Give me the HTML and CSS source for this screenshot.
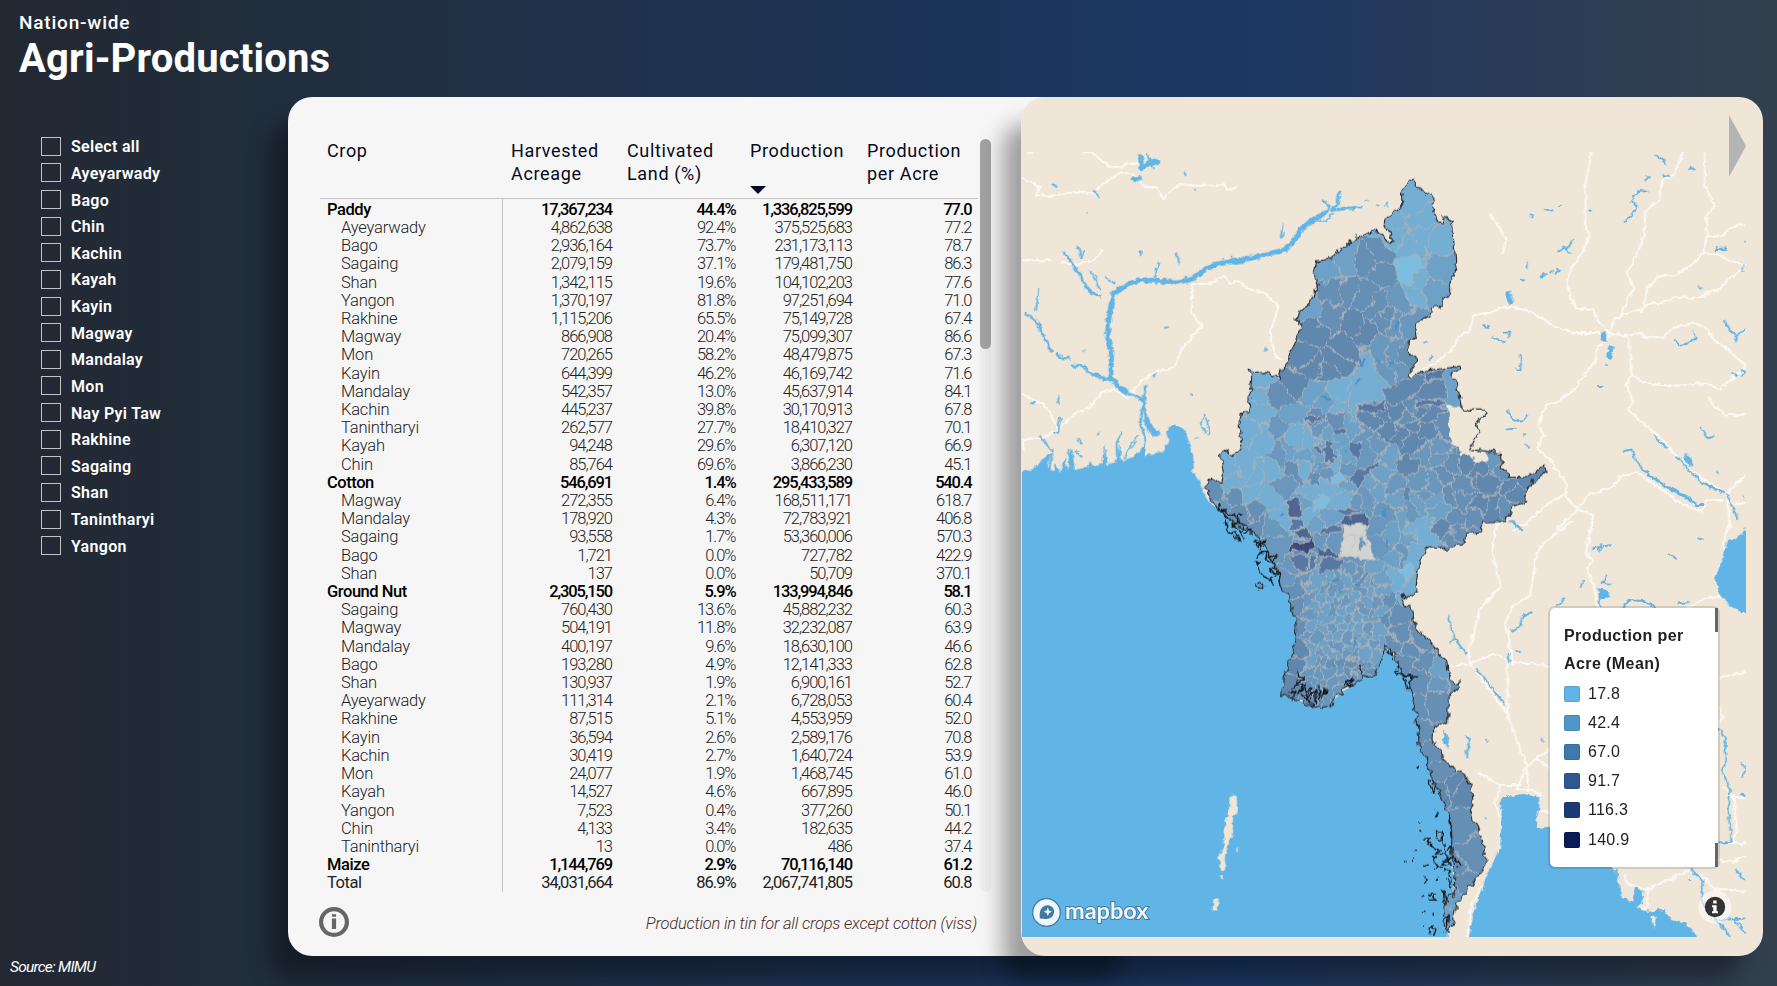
FILE: index.html
```html
<!DOCTYPE html>
<html lang="en">
<head>
<meta charset="utf-8">
<title>Agri-Productions</title>
<link rel="stylesheet" href="styles.css">
</head>
<body>
<div class="page">
  <aside class="side">
    <header class="heading">
      <div class="scope">Nation-wide</div>
      <h1 class="title">Agri-Productions</h1>
    </header>
    <ul class="slicer" id="slicer"></ul>
    <div class="source">Source: MIMU</div>
  </aside>
  <main class="cards">
    <section class="card table-card">
      <div class="table-area">
        <div class="table">
          <div class="row head">
            <div class="name">Crop</div>
            <div class="c1">Harvested<br>Acreage</div>
            <div class="c2">Cultivated<br>Land (%)</div>
            <div class="c3">Production<svg class="sort" viewBox="0 0 16 8"><path d="M0 0H16L8 8Z"/></svg></div>
            <div class="c4">Production<br>per Acre</div>
          </div>
          <div class="body" id="rows"></div>
        </div>
        <div class="scroll"><div class="thumb"></div></div>
      </div>
      <div class="foot">
        <svg class="info" viewBox="0 0 30 30"><circle cx="15" cy="15" r="12.9"/><path d="M15 7.2v2.6M15 11.6v10.4"/></svg>
        <div class="note">Production in tin for all crops except cotton (viss)</div>
      </div>
    </section>
    <section class="card map-card">
      <svg class="next" viewBox="0 0 17 62"><path d="M0 0L17 31L0 62Z"/></svg>
      <div class="map-area">
      <svg class="map" viewBox="3066 456 2172 2355" preserveAspectRatio="none">
        <defs>
          <filter id="rough" filterUnits="userSpaceOnUse" x="3066" y="456" width="2172" height="2355">
            <feTurbulence type="fractalNoise" baseFrequency="0.045" numOctaves="2" seed="4" result="n"/>
            <feDisplacementMap in="SourceGraphic" in2="n" scale="26" xChannelSelector="R" yChannelSelector="G"/>
          </filter>
          <filter id="wavy" filterUnits="userSpaceOnUse" x="3066" y="456" width="2172" height="2355">
            <feTurbulence type="fractalNoise" baseFrequency="0.022" numOctaves="1" seed="7" result="n"/>
            <feDisplacementMap in="SourceGraphic" in2="n" scale="52" xChannelSelector="R" yChannelSelector="G"/>
          </filter>
          <filter id="rough2" filterUnits="userSpaceOnUse" x="3066" y="456" width="2172" height="2355">
            <feTurbulence type="fractalNoise" baseFrequency="0.06" numOctaves="2" seed="9" result="n"/>
            <feDisplacementMap in="SourceGraphic" in2="n" scale="16" xChannelSelector="R" yChannelSelector="G"/>
          </filter>
          <clipPath id="country"><use href="#outline"/></clipPath>
          <path id="outline" transform="translate(3540 1020)" d="M682 -475L690 -482L703 -480L707 -458L735 -455L738 -438L755 -432L758 -400L775 -350L787 -352L790 -367L817 -358L822 -290L827 -240L820 -190L805 -172L817 -140L800 -130L780 -102L755 -98L750 -70L720 -60L707 -35L712 -8L688 5L686 40L704 50L707 78L682 105L695 112L720 95L780 86L840 78L838 88L817 98L818 118L832 130L838 165L843 198L865 210L905 210L915 225L890 250L897 278L870 328L930 335L962 340L965 385L985 408L1050 410L1075 385L1095 375L1098 398L1050 432L1030 482L1040 485L1000 498L978 548L905 548L905 575L860 580L850 615L780 627L742 618L735 645L720 660L715 700L710 758L680 773L662 765L675 795L695 797L705 855L740 895L797 960L800 990L820 1030L840 1025L842 1040L815 1060L805 1080L803 1145L765 1162L762 1200L780 1235L815 1280L850 1300L870 1330L878 1395L868 1410L875 1435L900 1475L910 1525L925 1565L895 1608L830 1690L825 1730L805 1780L795 1775L790 1720L795 1680L822 1660L825 1600L815 1540L815 1470L800 1410L770 1340L755 1330L750 1290L730 1240L718 1220L712 1150L695 1060L690 1010L665 1000L655 975L645 945L612 915L610 950L590 1000L565 1012L545 1005L538 972L545 1018L515 1035L490 1045L460 1090L430 1105L425 1095L400 1100L360 1085L330 1070L305 1070L310 1010L330 960L345 900L348 850L335 800L320 760L300 740L295 700L270 650L250 600L215 580L180 560L140 530L100 490L75 440L95 412L125 435L130 400L122 345L130 330L165 345L185 320L180 240L185 215L207 215L215 110L205 88L225 100L260 97L298 115L310 80L350 0L365 -40L348 -60L355 -85L395 -120L400 -150L415 -160L405 -210L410 -238L450 -242L490 -275L530 -310L570 -320L590 -330L608 -320L615 -300L640 -295L612 -345L615 -365L665 -400L665 -440Z"/>
        </defs>
        <rect class="land" x="3066" y="456" width="2172" height="2355"/>
        <g class="roads" filter="url(#rough2)">
          <g transform="translate(3030 270)">
            <path d="M48 186L68 190M215 187L245 187L298 230L335 232L350 220L380 222M36 263L75 280L88 290L78 316L130 318L170 308L250 308L298 268L330 246L370 255L405 290L440 292L460 325L510 282L560 287L640 285L650 300L680 292M36 511L122 511M155 515L200 525L255 508L278 478M36 910L110 950L145 1018L95 1045L36 1048L38 1080M145 1018L200 968L240 955L275 908L310 900L350 922L400 870L440 845L490 835L520 770L575 708L543 660L550 583L600 580L640 558L660 580L690 572L710 595L765 610L805 650L780 730L795 795L820 810"/>
          </g>
          <g transform="translate(4140 270)">
            <path d="M635 186L617 280L615 415L630 435L605 490L570 540L562 590L585 655L640 660L650 690L690 730M910 186L880 255L845 270L838 330L795 365L795 425L768 500L740 545L763 595L740 630L720 680L700 690L690 730M973 186L975 285L1005 350L978 380L982 435L968 488L940 520L890 555L840 558L800 595L792 655L722 678M982 435L1020 440L1065 408L1098 402M968 488L1010 490L1050 512L1098 525L1010 600L945 625L890 620L850 638L805 640L780 665M690 730L575 728L530 712L460 670L420 655L375 650L330 668L280 675L270 720L230 745L225 770L180 810L130 840L95 860M333 373L378 445L368 495M690 730L740 738L785 728L790 742L845 742L880 715L940 698L985 718L1000 752L1045 778L1098 830L1050 870L1018 898L985 880L870 888L800 880L755 855L745 740M755 855L740 880L757 935L745 960L830 1035L930 1140L1040 1210L1098 1155M690 735L655 770L645 820L615 850L590 890L530 938L500 940L475 1005L490 1035L470 1075L510 1110L560 1185L555 1215L595 1260L640 1275L630 1320M985 920L1000 945L1040 975L1098 975M1098 1238L1045 1238L1040 1210L1050 1320M1030 1230L980 1230L965 1262L910 1245L840 1195L770 1148L720 1160L700 1190L625 1215L595 1255L530 1320M555 1212L520 1230L440 1298L400 1320M352 1290L352 1320"/>
          </g>
          <g transform="translate(4140 1560)">
            <path d="M352 0L335 90L362 200L300 265L265 400L270 430L380 580L440 740L410 810L445 810L440 740M200 440L270 430L340 402L380 415L400 430L450 428L510 440M400 430L375 310L400 255L450 225L470 100L490 70L580 0M382 430L382 580M635 0L618 100L640 120L620 150L640 190L655 270M1050 0L1030 60L1035 110L1008 165L1015 215L1098 285M1030 230L975 235L920 265M295 758L360 795L420 795M510 690L470 710L440 745M470 715L510 745M360 795L345 850L362 900L360 985L310 1100L275 1150L262 1250M440 800L480 825L470 870L510 875M735 1060L740 1090L800 1110L930 1050L970 1070L1000 1105L1098 1115M800 1110L805 1165L770 1170M1015 560L1028 590L1010 620M1015 470L1060 465L1098 455M1030 800L1060 830L1098 835M1060 830L1070 940L1055 970L1098 970M1010 1020L1060 1025L1098 1010"/>
          </g>
        </g>
        <g filter="url(#rough2)">
          <path class="water" transform="translate(3030 270)" d="M20 1150L80 1130L110 1095L125 1085L112 1130L130 1145L135 1115L150 1147L165 1100L172 1140L185 1070L195 1140L235 1130L240 1110L255 1130L280 1120L285 1060L292 1125L320 1110L328 1060L335 1112L375 1100L408 1062L405 1100L420 1092L460 1085L475 1050L468 1025L485 1003L515 1010L532 1040L550 1100L550 1150L570 1170L580 1205L600 1240L670 1270L780 1320L850 1450L880 1650L860 1830L940 1850L1070 1750L1122 1665L1210 1760L1240 1900L1265 2030L1330 2190L1330 2400L1310 2560L20 2560Z"/>
          <path class="land" transform="translate(3030 1560)" d="M665 825L680 823L682 875L665 890L670 935L658 965L645 1010L645 1055L635 1055L625 1015L640 985L645 915L640 905L655 890L658 840ZM610 1138L622 1132L629 1150L622 1172L608 1170ZM675 990l10 -10l-4 14zM630 1066h8v8h-6z"/>
          <g transform="translate(4140 1560)">
            <path class="water" d="M262 1270L285 1165L310 1100L315 1070L345 1010L360 985L365 870L358 850L370 832L430 822L478 832L478 860L465 925L510 920L560 900L660 1000L705 1050L715 1085L725 1130L760 1145L765 1100L790 1115L785 1150L770 1160L800 1175L850 1170L875 1200L915 1210L950 1245L950 1270ZM1120 18L1060 60L1045 62L1030 95L1025 130L1005 170L1015 215L1050 260L1120 293ZM655 205L685 212L690 232L660 235ZM190 632L208 650L202 688L188 660Z"/>
            <path class="land" d="M810 1190L828 1190L822 1225Z"/>
            <path class="river" d="M205 283L215 330L230 365L258 400M212 370l15 -15M285 448L310 470L340 510L375 555M455 275L425 295L420 320L390 335M555 235L530 260M640 85L695 75M665 70L655 95M865 98L890 118M680 170L665 190L690 190M610 180L605 200M658 210L660 262M730 262L745 240L790 243L830 262M895 252L925 245M385 400L390 425M408 392l14 6M485 650l3 15M258 650L270 655L262 680L262 715M320 660l4 6M316 890l6 4M1013 625L1038 655L1035 730L1028 755L1050 810L1045 880L1055 965L1015 970M1085 730L1098 745L1085 775M1080 820l18 10M1070 1050L1085 1075L1098 1080M930 1045L970 1080L965 1150L1050 1250M1020 1200L1098 1195M1060 1195L1098 1240M925 1080h8M395 0L425 32M955 60l12 -6"/>
            <path class="river" d="M710 1050L712 1090M740 1150L735 1160"/>
          </g>
          <g class="river" transform="translate(3030 270)">
            <path class="w12" d="M955 362L905 392L875 415L850 455L825 480L780 490L740 500L690 512L630 520L590 535L540 570L500 576L440 573L385 570L345 588L312 608L302 650L295 700L292 740L305 785L302 865L330 893L355 910"/>
            <path class="w7" d="M988 302L982 345L965 360L1060 353M938 327L955 345L955 362M355 910L402 932L405 890L415 885M402 932L408 990L440 1035M402 932L390 1000L408 1050M160 483L190 525L240 605L270 620M42 670L78 690L98 735L125 785M140 790L155 803L182 805M185 828L215 825L240 850L305 873"/>
            <path class="w12" d="M405 985L430 1030L450 1032M390 190L395 235L425 215L450 218M365 265L395 266"/>
            <path d="M410 190L418 212L430 240M418 205L445 212M522 248l6 10M553 298l6 6M125 287h14M255 300l10 24M230 373h6M818 400L812 445M825 430l-12 14M392 480v18M497 490L510 522M445 515L435 565M240 540L272 600M205 470L212 505L225 480M85 595L78 665M285 560l30 22M462 712h12M220 783h6M768 770v14M663 495L665 520M440 848L432 862M145 915V940M60 943L80 938M150 980L145 1025L130 1028M92 1037L105 1060L128 1085M265 1025v12M202 1045l12 18M336 1025L320 1060L320 1100M385 1035L355 1080L345 1105M408 1050L400 1080L370 1110M175 1075L180 1110M585 970L575 1000L585 1030M590 985L598 1032M540 908l8 6M555 1045h10M1065 335l10 -4M1097 345l12 4M1132 335l-4 16M910 392L950 392L970 370M125 1090L118 1140M195 1080L215 1100"/>
          </g>
          <g class="river" transform="translate(4140 270)">
            <path class="w12" d="M670 725L672 755M695 770L685 805M382 605L392 640"/>
            <path d="M682 822v6M652 888h12M825 195L850 208L855 225M848 255L870 258M795 255L810 260L795 275M925 238l18 0M935 230v12M805 302L770 308L752 335L770 345L755 375L732 398M450 375l10 6M495 358L520 362M535 350l12 -8M625 362h10M582 450L560 475L532 485M550 470L570 490M440 515V535M422 570l12 6M480 562L500 548M508 548H518M528 535l10 8L525 550M308 708L330 712M335 740L355 752L380 758M370 728L390 728L385 745M422 792V838L405 838M130 762L142 756M148 812L158 798M380 958L400 990L425 995L442 975M380 1018L410 1015M432 1030v10M435 1062L448 1075M1032 688L1050 720L1070 735L1098 718M1070 735L1068 758M882 752L905 768L948 745L940 728M1005 480H1040M1010 470v12M1022 470v12M1032 470v12M1093 455h5M1090 520V545M955 585l8 14M1055 850L1075 856M1080 840L1098 845L1085 862M962 1010L985 1045L1000 1040M915 1090L930 1130M910 1100L940 1125M1010 1145l8 6M820 1035L862 1075M890 1100L935 1150L970 1180L1035 1210M725 1085L755 1078L765 1110L790 1140L850 1185L905 1210L950 1245L970 1245M1040 1210L1060 1260L1075 1290M1090 1220v8M1092 1315h4M390 1292L425 1320"/>
            <path class="w7" d="M800 1150L870 1195L955 1246M918 1095L935 1120M960 1175L1010 1200"/>
          </g>
        </g>
        <g filter="url(#rough)">
          <use class="base" href="#outline"/>
          <g clip-path="url(#country)">
            <g filter="url(#wavy)"><g class="cells" id="cells" transform="translate(3540 1020)"></g></g>
            <g class="cells" transform="translate(3540 1020)">
              <path class="s0" d="M645 -240L700 -255L725 -245L735 -215L700 -200L700 -170L680 -165L650 -180Z"/>
              <path class="s1" d="M545 40L575 30L580 80L605 110L640 150L605 180L530 192L525 250L508 248L508 110L540 80Z"/>
              <path class="s7" d="M670 130L725 108L700 150L678 160Z"/>
              <path class="s6" d="M735 105L800 82L785 115L735 118Z"/>
              <path class="s5" d="M720 125L795 118L800 175L730 178L695 165Z"/>
              <path class="s6" d="M710 185L790 178L798 195L705 202Z"/>
              <path class="s6" d="M532 195L585 190L625 175L610 210L570 220L535 215Z"/>
              <path class="s6" d="M405 315L430 325L432 340L410 338ZM455 265L500 265L500 282L460 280ZM510 305L545 310L540 350L515 345ZM510 405L560 380L605 358L600 378L550 405L545 440L525 435L510 415Z"/>
              <path class="s0" d="M400 490L430 455L455 490L400 515ZM455 410L480 390L502 425L455 430ZM650 685L690 670L705 700L680 725Z"/>
              <path class="s7" d="M318 490L345 472L362 490L370 530L330 532ZM340 575L385 558L395 592L355 595ZM482 545L500 530L558 525L566 558L520 550L485 558Z"/>
              <path class="s8" d="M322 635L345 610L385 605L400 592L402 612L388 640L350 632Z"/>
              <path class="s7" d="M412 620L445 630L478 640L480 653L412 650Z"/>
              <path class="s6" d="M420 655L488 657L488 690L440 690L415 705ZM330 645L385 645L380 695L355 698ZM390 645L410 648L410 690L388 685ZM418 570L455 553L482 558L480 575L425 582ZM465 512L500 502L545 515L500 528ZM330 535L370 540L372 560L332 570ZM372 235L400 222L430 240L378 250Z"/>
              <path class="grey" d="M487 560L525 550L565 558L560 585L568 610L585 650L575 655L480 652L482 620L490 595ZM500 590L560 590M525 590L520 625M540 590L535 630L560 610"/>
              <path class="s1" d="M712 570L750 530L765 535L750 560L780 595L800 615L760 620L712 612Z"/>
              <path class="s5" d="M650 365L680 340L718 365L715 390L695 408L655 402ZM755 550L800 535L812 575L785 595L755 575ZM670 440L690 440L690 480L672 478ZM890 405L950 405L965 430L940 465L895 465Z"/>
              <path class="s5" d="M600 150L660 130L720 100L740 120L700 165L640 200Z"/>
            </g>
          </g>
          <g class="lake" transform="translate(3540 1020)"><path d="M547 -45v18M650 -55v30M640 65l-12 12M590 55l14 14M425 173h24M555 65L535 78M540 118L525 130M613 505L615 535M625 600v18M410 620l4 20M303 520l6 8M465 715v8M495 330v10M395 430l14 -10M525 735h16M617 820v14M525 890v24M465 920v8M480 760l6 -12M350 75v10"/></g>
          <use class="border" href="#outline"/>
          <path class="land" transform="translate(3540 1020)" d="M795 196L838 200L865 212L905 212L912 225L887 250L894 278L868 330L925 338L925 360L900 364L850 345L812 310L806 240Z"/>
          <g class="isles" transform="translate(3540 1020)">
            <path d="M110 485L135 530L150 545L170 560L190 600M115 500L140 520L165 520L175 545L155 560M135 545L150 585L165 575L180 610M165 575L175 600L160 590M175 545L205 560L210 575L190 580M180 520L172 545M190 555L180 575M225 600L255 610L235 622L222 605L250 620L240 600L258 600L240 630"/>
            <path d="M225 655L240 640L262 640L255 655L275 660L290 680L270 690L290 700L270 715L280 735L255 710L235 690L222 665L245 670M262 640L285 650L280 660M290 690L300 740"/>
            <path class="islet" d="M220 730L235 722L255 735L250 750L235 750Z"/>
            <path d="M360 985L355 1010L375 1015L345 1030L370 1040L350 1060L380 1040L375 1075L395 1040L390 1080L405 1045L405 1090L420 1040L418 1085L435 1045L430 1080M330 1060L345 1050L340 1080M355 1030L335 1045M360 1060L400 1098M490 1040L510 1015L525 1030L500 1035L520 1020"/>
            <path d="M672 1010L690 1010L690 1045L680 1045ZM620 930L640 960M630 925L635 950M655 975L650 995L670 1005L715 1008M715 1285h2"/>
          </g>
          <g class="isles" transform="translate(4140 1560)">
            <path d="M165 870L175 890M120 908h4M118 935h6M102 988h4M75 1025h8M98 1018h4M170 935L190 935L190 965L165 950ZM130 960L155 955L140 970L160 970M150 975L180 990L160 1005L190 1000L205 1020L185 1030L215 1035L195 1010L225 1015L240 1040M190 970L200 1000L215 975L220 990M160 1010L175 1045M130 1035L145 1035M165 1045L190 1040M135 1065L140 1085M165 1085L170 1075M190 1050L210 1060L215 1100L200 1075M125 1130h8M145 1130L155 1120L170 1140L145 1140M125 1180h6M160 1175v10M132 1215h4M150 1245L155 1215L168 1225L160 1250M190 1110L200 1150M205 880L215 960M190 1200L205 1185L200 1240M110 745h6M145 780L155 820L165 790"/>
          </g>
        </g>
      </svg>
      <div class="legend">
        <div class="legend-title">Production per<br>Acre (Mean)</div>
        <ul class="keys">
          <li><i class="k1"></i>17.8</li><li><i class="k2"></i>42.4</li><li><i class="k3"></i>67.0</li>
          <li><i class="k4"></i>91.7</li><li><i class="k5"></i>116.3</li><li><i class="k6"></i>140.9</li>
        </ul>
        <span class="bar top"></span><span class="bar bottom"></span>
      </div>
      <div class="mapbox">
        <svg class="pin" viewBox="0 0 28 28"><circle cx="14" cy="14" r="13.3"/><path class="drop" d="M7.6 19.9C7 15 7.600 11.400 10 9C12.700 6.300 16.900 6.300 19.500 8.800C22 11.400 22 15.500 19.400 18.100C17 20.500 12.500 20.600 7.600 19.900Z"/><path class="star" d="M15.300 9.200l1.200 2.900l2.900 1.200l-2.900 1.200l-1.200 2.900l-1.200 -2.900l-2.900 -1.200l2.900 -1.200Z"/></svg>
        <span class="brand">mapbox</span>
      </div>
      <svg class="attrib" viewBox="0 0 34 34"><circle class="halo" cx="17" cy="17" r="16.500"/><circle class="disc" cx="17" cy="17" r="10.200"/><path class="i" d="M15.200 10.500h3.400v3h-3.400zM14 15.200h4.600v6h1.400v2h-6v-2h1.300v-4H14z"/></svg>
      </div>
    </section>
  </main>
</div>
<script src="script.js"></script>
</body>
</html>
```
FILE: styles.css
```css
* { box-sizing: border-box; }
body { margin: 0; width: 1777px; height: 986px; overflow: hidden; font-family: Roboto, "Open Sans", sans-serif; }
ul { list-style: none; margin: 0; padding: 0; }
.page { display: flex; width: 1777px; height: 986px; background: linear-gradient(90deg, #232833 0%, #212d3a 12%, #1f314c 35%, #1c355c 58%, #1b3864 70%, #24395c 78%, #2b3c55 88%, #33404d 100%); }
.side { width: 288px; flex: none; display: flex; flex-direction: column; color: #fff; }
.heading { height: 133px; flex: none; padding: 11px 0 0 19px; white-space: nowrap; }
.scope { font-size: 19px; line-height: 24px; font-weight: 500; letter-spacing: .8px; }
.title { margin: 0; font-size: 40px; line-height: 48px; font-weight: 700; letter-spacing: .17px; }
.slicer { display: flex; flex-direction: column; padding-left: 41px; }
.slicer li { display: flex; align-items: center; gap: 10px; height: 26.64px; font-size: 16px; font-weight: 600; letter-spacing: .3px; }
.box { width: 20px; height: 19px; border: 1px solid #c3c3c1; }
.slicer .label { padding-top: 1px; }
.source { margin-top: auto; padding: 0 0 9px 10px; font-size: 15.500px; line-height: 20px; font-style: italic; font-weight: 400; letter-spacing: -.75px; }

.cards { display: flex; margin-top: 97px; height: 859px; }
.card { height: 859px; border-radius: 24px; box-shadow: -20px 25px 22px -2px rgba(0, 0, 0, .36); }
.table-card { width: 857px; flex: none; margin-right: -124px; background: #f6f6f6; padding: 42px 0 0 32px; }
.table-area { display: flex; gap: 3px; height: 753px; }
.table { width: 658px; color: #000; }
.row { display: grid; grid-template-rows: 100%; grid-template-columns: 183px 109px 123.500px 116.500px 119.500px; height: 18.215px; line-height: 18.215px; font-size: 16.500px; font-weight: 300; letter-spacing: -1.02px; color: #222; }
.row > div { text-align: right; white-space: nowrap; padding-top: 1.800px; }
.row .name { text-align: left; padding-left: 21px; letter-spacing: -.2px; border-right: 1px solid #c4c4c4; }
.row.group { font-weight: 500; color: #000; letter-spacing: -1.150px; }
.row.group .name, .row.total .name { padding-left: 7px; letter-spacing: -.45px; }
.row.total { height: 19px; font-weight: 400; letter-spacing: -1px; }
.row.head { height: 60px; border-bottom: 1px solid #c4c4c4; font-size: 18px; line-height: 23px; font-weight: 400; letter-spacing: .65px; color: #050a22; }
.row.head > div { text-align: left; padding: 0 0 0 8px; border: 0; letter-spacing: .65px; }
.row.head .name { padding-left: 7px; }
.row.head .c2 { padding-left: 15px; }
.row.head .c3 { padding-left: 14.500px; display: flex; flex-direction: column; }
.row.head .c4 { padding-left: 15px; }
.sort { width: 16px; height: 8px; margin-top: 23.500px; fill: #050a22; }
.scroll { width: 11px; margin-left: -1px; background: #ededed; border-radius: 6px; }
.thumb { height: 210px; border-radius: 6px; background: #a2a2a2; }
.foot { display: flex; width: 657px; justify-content: space-between; align-items: center; }
.info { width: 30px; height: 30px; margin: 15px 0 0 -1px; fill: none; stroke: #666; stroke-width: 4.200; }
.note { margin-top: 17px; font-size: 16.500px; font-style: italic; font-weight: 300; letter-spacing: -.22px; color: #4a2a2a; white-space: nowrap; }

.map-card { width: 742px; flex: none; background: #efe6d8; display: flex; flex-direction: column; }
.next { width: 17px; height: 62px; margin: 18px 0 -25px 708px; fill: #b4b4b4; flex: none; z-index: 1; }
.map-area { position: relative; width: 724px; height: 785px; margin-left: 1px; overflow: hidden; flex: none; }
.map { display: block; width: 724px; height: 785px; }
.land { fill: #efe6d8; }
.water { fill: #60b4e6; }
.roads { fill: none; stroke: #fcf9f5; stroke-width: 6; stroke-linejoin: round; }
.river { fill: none; stroke: #60b4e6; stroke-width: 5.500; stroke-linejoin: round; }
.w7 { stroke-width: 8; }
.w12 { stroke-width: 15; }
.base { fill: #6a9ac1; }
.border { fill: none; stroke: #2f3338; stroke-width: 3.500; }
.cells { stroke: #a9b1b8; stroke-width: 3.200; stroke-linejoin: round; }
.lake { fill: none; stroke: #4a8fc8; stroke-width: 8; }
.isles { fill: none; stroke: #16191c; stroke-width: 4; stroke-linejoin: round; }
.islet { fill: #6a9ac1; stroke-width: 3; }
.s0 { fill: #7cbee0; } .s1 { fill: #74aed3; } .s2 { fill: #6da1c7; } .s3 { fill: #6997be; } .s4 { fill: #668fb6; }
.s5 { fill: #6087ae; } .s6 { fill: #5977a3; } .s7 { fill: #4f6592; } .s8 { fill: #3f4876; }
.grey { fill: #d3d3d1; stroke: #bfc2c4; }

.legend { position: absolute; left: 528px; top: 456px; width: 168px; height: 259px; padding: 14px 0 0 14px; background: #fff; border-radius: 5px; box-shadow: 0 0 0 2px rgba(0, 0, 0, .12); font-family: "Liberation Sans", sans-serif; color: #222; }
.legend-title { font-size: 16px; font-weight: 700; line-height: 28px; letter-spacing: .42px; }
.keys { padding-top: 1px; }
.keys li { display: flex; align-items: center; gap: 8px; height: 29.200px; font-size: 16px; letter-spacing: .25px; }
.keys i { width: 16px; height: 16px; border-radius: 2px; box-shadow: inset 0 0 0 1px rgba(0, 0, 0, .1); }
.k1 { background: #60b4e6; } .k2 { background: #4f97c9; } .k3 { background: #3e79ad; } .k4 { background: #2c5a90; } .k5 { background: #1b3a74; } .k6 { background: #0a1b57; }
.bar { position: absolute; right: 0; width: 3px; height: 24px; background: #666; }
.top { top: 0; }
.bottom { bottom: 0; }
.mapbox { position: absolute; left: 10px; top: 746px; display: flex; align-items: center; gap: 4px; }
.pin { width: 29px; height: 29px; fill: #f0f7fe; }
.pin circle { stroke: #417ba3; stroke-width: 1.200; }
.pin .drop { fill: #417ba3; }
.brand { font-family: Lato, sans-serif; font-weight: 700; font-size: 23.500px; line-height: 26px; color: #f0f7fe; -webkit-text-stroke: 2px #417ba3; paint-order: stroke fill; margin-top: -5px; }
.attrib { position: absolute; left: 676px; top: 738px; width: 34px; height: 34px; }
.halo { fill: rgba(255, 255, 255, .55); }
.disc { fill: #333; }
.i { fill: #fff; }
```
FILE: script.js
```js
const regions = ["Select all", "Ayeyarwady", "Bago", "Chin", "Kachin", "Kayah", "Kayin", "Magway", "Mandalay", "Mon", "Nay Pyi Taw", "Rakhine", "Sagaing", "Shan", "Tanintharyi", "Yangon"];
document.getElementById("slicer").innerHTML = regions
  .map(r => `<li><span class="box"></span><span class="label">${r}</span></li>`).join("");

// "*" marks a crop row, "=" the total row
const rows = `*Paddy|17,367,234|44.4%|1,336,825,599|77.0
Ayeyarwady|4,862,638|92.4%|375,525,683|77.2
Bago|2,936,164|73.7%|231,173,113|78.7
Sagaing|2,079,159|37.1%|179,481,750|86.3
Shan|1,342,115|19.6%|104,102,203|77.6
Yangon|1,370,197|81.8%|97,251,694|71.0
Rakhine|1,115,206|65.5%|75,149,728|67.4
Magway|866,908|20.4%|75,099,307|86.6
Mon|720,265|58.2%|48,479,875|67.3
Kayin|644,399|46.2%|46,169,742|71.6
Mandalay|542,357|13.0%|45,637,914|84.1
Kachin|445,237|39.8%|30,170,913|67.8
Tanintharyi|262,577|27.7%|18,410,327|70.1
Kayah|94,248|29.6%|6,307,120|66.9
Chin|85,764|69.6%|3,866,230|45.1
*Cotton|546,691|1.4%|295,433,589|540.4
Magway|272,355|6.4%|168,511,171|618.7
Mandalay|178,920|4.3%|72,783,921|406.8
Sagaing|93,558|1.7%|53,360,006|570.3
Bago|1,721|0.0%|727,782|422.9
Shan|137|0.0%|50,709|370.1
*Ground Nut|2,305,150|5.9%|133,994,846|58.1
Sagaing|760,430|13.6%|45,882,232|60.3
Magway|504,191|11.8%|32,232,087|63.9
Mandalay|400,197|9.6%|18,630,100|46.6
Bago|193,280|4.9%|12,141,333|62.8
Shan|130,937|1.9%|6,900,161|52.7
Ayeyarwady|111,314|2.1%|6,728,053|60.4
Rakhine|87,515|5.1%|4,553,959|52.0
Kayin|36,594|2.6%|2,589,176|70.8
Kachin|30,419|2.7%|1,640,724|53.9
Mon|24,077|1.9%|1,468,745|61.0
Kayah|14,527|4.6%|667,895|46.0
Yangon|7,523|0.4%|377,260|50.1
Chin|4,133|3.4%|182,635|44.2
Tanintharyi|13|0.0%|486|37.4
*Maize|1,144,769|2.9%|70,116,140|61.2
=Total|34,031,664|86.9%|2,067,741,805|60.8`;
document.getElementById("rows").innerHTML = rows.split("\n").map(line => {
  const kind = line[0] === "*" ? " group" : line[0] === "=" ? " total" : "";
  const cells = line.replace(/^[*=]/, "").split("|");
  return `<div class="row${kind}">` + cells.map((c, i) => `<div class="${i ? "c" + i : "name"}">${c}</div>`).join("") + "</div>";
}).join("");

// Township centres: x, y, shade
const towns = [
  [690,-400,1],[720,-360,1],[630,-350,1],[655,-310,1],[690,-290,1],[780,-290,1],[730,-310,1],[715,-190,1],[705,-140,1],[795,-220,2],[755,-150,2],
  [600,-250,4],[560,-230,4],[600,-210,4],[490,-240,2],[440,-205,2],[460,-150,4],[500,-140,4],[560,-130,4],[590,-100,4],[620,-70,4],[660,-110,3],[650,-60,3],[690,-40,3],
  [385,-90,2],[400,-30,5],[450,-60,4],[520,-40,5],[555,-25,5],[610,-60,4],[600,20,3],[640,40,3],[680,50,4],[650,80,3],[620,100,3],
  [370,50,5],[400,80,5],[460,60,5],[490,20,5],[440,90,5],[345,130,5],[400,165,2],[430,190,2],[470,190,1],[480,150,1],[570,150,1],
  [250,125,1],[250,170,1],[250,215,1],[250,290,1],[200,270,1],[200,380,1],[155,390,1],[230,400,1],[270,390,1],[210,460,1],[265,470,1],[170,430,1],[290,170,4],[292,260,3],[300,350,3],[305,430,3],[300,530,1],
  [340,220,2],[350,280,1],[390,290,1],[370,350,2],[330,340,2],[335,400,4],[375,390,1],[420,230,4],[460,235,4],[440,290,2],[480,300,2],[420,270,3],[410,350,2],[450,345,6],[470,330,2],[500,340,2],[520,270,2],
  [425,390,3],[410,410,4],[445,410,3],[470,370,1],[495,380,3],[395,460,1],[440,440,1],[470,450,1],[500,440,2],[480,480,1],[390,520,1],[380,490,2],[440,530,2],[410,550,2],[460,600,3],[430,600,3],
  [550,280,3],[580,250,5],[620,270,5],[610,220,5],[650,210,5],[680,230,4],[660,280,5],[700,300,5],[690,260,5],[740,270,5],[750,225,5],[780,260,4],[780,320,3],[730,200,5],[690,190,4],[820,170,2],
  [560,340,3],[600,320,3],[570,430,2],[590,460,2],[620,350,2],[640,440,3],[600,400,2],[560,470,3],[540,500,3],[590,560,3],[625,520,3],[650,480,2],[665,540,2],[690,510,3],
  [740,350,3],[775,350,3],[720,420,3],[755,420,3],[790,400,4],[820,380,4],[850,430,4],[860,370,5],[900,380,5],[940,365,3],[900,440,5],[940,430,5],[970,390,4],[990,440,5],[1050,410,5],[1010,460,5],
  [740,460,3],[770,480,2],[720,490,2],[780,520,2],[810,470,4],[845,480,4],[830,520,4],[870,540,4],[900,490,5],[940,500,5],[980,500,4],[850,580,4],[820,600,4],
  [700,570,1],[680,600,2],[690,640,1],[660,640,3],[630,660,2],[650,720,1],[700,740,1],[640,580,2],[610,620,3],[590,680,2],[600,720,2],[620,780,4],[650,830,4],[610,840,4],[660,880,4],[690,930,4],[720,900,4],[640,910,4],[670,970,4],[740,970,4],[780,980,2],[720,1020,4],[760,1090,4],[720,1100,4],[780,1030,3],[820,1040,4],
  [730,1180,4],[745,1240,4],[780,1300,4],[770,1360,5],[820,1340,5],[850,1360,5],[840,1450,4],[870,1540,4],[830,1580,4],[850,1620,4],[810,1680,2],[810,1740,2],
  [100,460,4],[160,475,4],[130,500,3],[190,520,4],[225,510,4],[230,560,4],[275,560,3],[285,630,3],[330,680,3],[310,710,3],[340,750,4],[350,790,4],[360,860,4],[360,930,5],[350,980,5],[330,1030,5],[400,740,2],[385,720,2],[380,670,4],[530,670,3],[520,690,3],[540,720,4],[530,700,3]
];
// Denser townships of the delta, laid on a staggered lattice
for (let r = 0; r < 13; r++) {
  for (let c = 0; c < 8; c++) {
    const k = (r * 7 + c * 13) % 11;
    towns.push([385 + c * 28 + (r % 2) * 13 + k, 720 + r * 27 + ((c * 17 + r * 5) % 15), r > 8 ? 3 + (k % 2) : 2 + (k % 3 === 0)]);
  }
}
const clip = (poly, a, b) => {
  const mx = (a[0] + b[0]) / 2, my = (a[1] + b[1]) / 2, dx = b[0] - a[0], dy = b[1] - a[1];
  const side = p => (p[0] - mx) * dx + (p[1] - my) * dy;
  const out = [];
  poly.forEach((p, i) => {
    const q = poly[(i + 1) % poly.length], s = side(p), t = side(q);
    if (s <= 0) out.push(p);
    if (s * t < 0) out.push([p[0] + (q[0] - p[0]) * s / (s - t), p[1] + (q[1] - p[1]) * s / (s - t)]);
  });
  return out;
};
document.getElementById("cells").innerHTML = towns.map(a => {
  let poly = [[0, -520], [1150, -520], [1150, 1850], [0, 1850]];
  towns.forEach(b => { if (b !== a && poly.length) poly = clip(poly, a, b); });
  return poly.length ? `<path class="s${a[2]}" d="M${poly.map(p => p.map(v => v.toFixed(1)).join(" ")).join("L")}Z"/>` : "";
}).join("");
```
